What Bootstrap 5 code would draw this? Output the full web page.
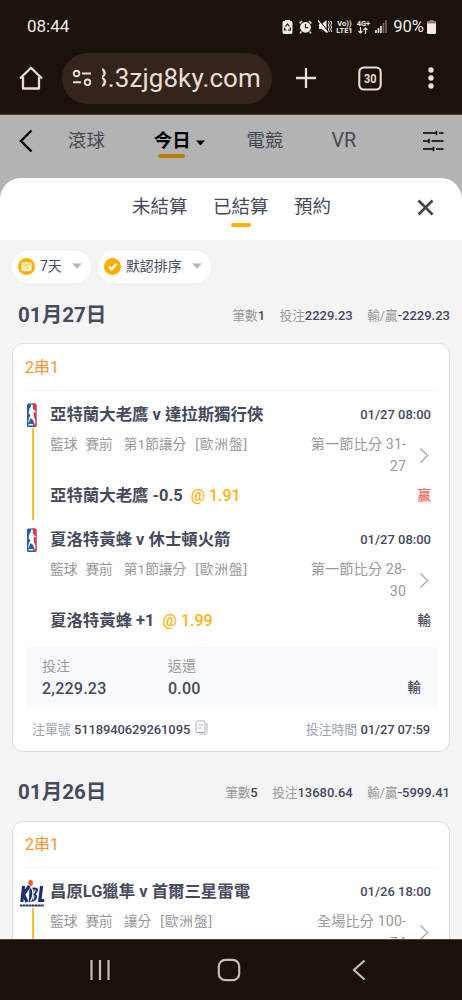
<!DOCTYPE html>
<html lang="zh-Hant">
<head>
<meta charset="utf-8">
<meta name="viewport" content="width=device-width, initial-scale=1">
<title>注單</title>
<link href="https://cdn.jsdelivr.net/npm/bootstrap@5.3.0/dist/css/bootstrap.min.css" rel="stylesheet">
<style>
  body { font-family: Roboto, "Noto Sans CJK TC", sans-serif; color: #454a5c; background: #b3b3b3; height: 1000px; overflow: hidden; }
  svg { display: block; flex: none; }
  .phone { width: 462px; height: 1000px; }
  .statusbar { height: 52px; background: #1b120c; color: #f3ebe6; padding: 2px 26px 0 27px; font-size: 17px; }
  .tiny { font-size: 7.5px; line-height: 7px; font-weight: 700; text-align: center; margin-left: 4px; }
  .browserbar { height: 63px; background: #1b120c; padding: 0 28px 10px 18px; border-bottom: 1px solid #4f3f35; color: #ecddd5; }
  .url-pill { width: 210px; height: 51px; background: #35241b; border-radius: 26px; margin-left: 18px; padding-left: 10px; }
  .url-clip { width: 165px; margin-left: 10px; overflow: hidden; white-space: nowrap; font-size: 26px; line-height: 40px; letter-spacing: .1px; }
  .url-clip span { margin-left: -9px; }
  .appbar { height: 63px; background: #b3b3b3; padding: 0 18px 12px 19px; font-size: 18.4px; color: #454857; line-height: 26px; }
  .sheet { border-radius: 21px 21px 0 0; min-height: 0; }
  .sheet-tabs { height: 62px; padding: 0 28px 4px 132px; font-size: 18.5px; line-height: 28px; gap: 25.5px; }
  .tab-on::after { content: ""; position: absolute; left: 50%; margin-left: -10px; width: 20px; height: 4px; border-radius: 2px; background: #ffb001; bottom: -6px; }
  .today { color: #000; font-weight: 700; }
  .today::after { background: #b57e05; width: 27px; margin-left: -14px; bottom: -4px; }
  .sheet-body { background: #f4f4f4; padding: 11px 12px 0; }
  .chip { height: 32px; border-radius: 16px; background: #fff; font-size: 14px; padding: 0 9px 2px 6px; }
  .chip span { margin-left: 5px; margin-right: 10px; }
  .dayrow { height: 60px; padding: 4px 0 0 6px; }
  .dayrow.later { height: 69px; padding-top: 11px; }
  .day { font-size: 20.6px; font-weight: 700; line-height: 30px; white-space: nowrap; }
  .totals { gap: 14.5px; font-size: 12.6px; color: #999; white-space: nowrap; padding-top: 1px; }
  .totals b, .meta b { font-size: 13px; font-weight: 500; color: #454a5c; }
  .meta b { letter-spacing: -.12px; }
  .slip { border: 1px solid #d8e0e9; border-radius: 11px; padding: 0 12px; }
  .slip-head { height: 47px; color: #ff932e; font-size: 16px; line-height: 48px; border-bottom: 1px solid #f3f3f3; margin-bottom: 11px; }
  .leg { padding-bottom: 20px; color: #454a5c; }
  .leg.last-leg { padding-bottom: 14px; }
  .rail { width: 25px; }
  .rail i { width: 2px; background: #ffc02e; margin: 0 0 -13px 6.5px; }
  .leg-title { height: 24px; font-size: 16.42px; line-height: 26px; font-weight: 700; white-space: nowrap; padding-right: 6px; }
  .leg-title time { font-size: 13px; font-weight: 500; }
  .leg-sub { margin-top: 7px; font-size: 13.7px; line-height: 22px; color: #999; height: 44px; padding-right: 8px; white-space: nowrap; }
  .league { margin-left: 11px; }
  .odds-type { margin-left: 9px; letter-spacing: .9px; }
  .score { width: 104px; white-space: normal; text-align: right; font-size: 14.2px; line-height: 22px; letter-spacing: .1px; margin-right: 13px; }
  .leg-pick { margin-top: 6px; height: 24px; line-height: 25px; font-size: 16.42px; font-weight: 700; padding-right: 6px; }
  .odds { color: #ffb310; font-weight: 500; margin-left: 4px; font-size: 16px; }
  .result { font-size: 13.5px; font-weight: 500; }
  .win { color: #ed655d; }
  .sumbox { height: 62px; background: #f9faff; padding: 10px 17px 0 16px; margin: 0 -1px 0 1px; }
  .sumbox small { display: block; font-size: 14px; line-height: 21px; color: #999; }
  .sumbox b { display: block; font-size: 16.1px; line-height: 23px; font-weight: 500; letter-spacing: .2px; }
  .sumcol { width: 126px; }
  .meta { height: 43px; padding: 0 7px; font-size: 12.9px; color: #9ca4b5; white-space: nowrap; }
  .navkeys { height: 61px; background: #1a110b; border-top: 1px solid #51463f; padding: 0 96px 0 89px; }
</style>
</head>
<body>
<div class="phone d-flex flex-column overflow-hidden">
  <div class="statusbar d-flex align-items-center justify-content-between flex-shrink-0">
    <span>08:44</span>
    <div class="d-flex align-items-center">
      <svg width="11" height="14" viewBox="0 0 11 14"><path d="M3 1V0h5v1h1.500Q10.500 1 10.500 2.500V12Q10.500 14 9 14H2Q.5 14 .5 12V2.500Q.5 1 1.500 1z" fill="#f3ebe6"/><path d="M3.500 6.500 5.500 4l2 2.500M8.200 7.500 8.500 10H6M2.600 7.500 2.500 10h2" fill="none" stroke="#1b120c" stroke-width="1.200"/></svg>
      <svg style="margin:0 6px 0 6px" width="13" height="14" viewBox="0 0 13 14"><circle cx="6.500" cy="7.300" r="5.400" fill="#f3ebe6"/><path d="M.6 3.400 3.200 1M12.400 3.400 9.800 1M2.400 11.500 1 13.300M10.600 11.500l1.400 1.800" stroke="#f3ebe6" stroke-width="1.500"/><path d="M6.500 4v3.600h2.800" fill="none" stroke="#1b120c" stroke-width="1.200"/></svg>
      <svg width="14" height="13" viewBox="0 0 14 13"><path d="M1 4h3l4.500-4v13L4 9H1z" fill="#f3ebe6"/><path d="M1 0 10 11.500" stroke="#1b120c" stroke-width="1.200"/><path d="M0 .5 9.500 12.500" stroke="#f3ebe6" stroke-width="1.300"/><path d="m10.300 1 1 2-1 2 1 2-1 2 1 3M12.700 1l1 2-1 2 1 2-1 2 1 3" stroke="#f3ebe6" fill="none"/></svg>
      <div class="tiny">Vo))<br>LTE1</div>
      <div class="tiny">4G+<svg class="mx-auto" width="10" height="7" viewBox="0 0 10 7"><path d="M2.500 0v6M.5 4l2 2 2-2M7.500 7V1M5.500 3l2-2 2 2" fill="none" stroke="#f3ebe6" stroke-width="1.200"/></svg></div>
      <svg style="margin-left:5px" width="12" height="13" viewBox="0 0 12 13"><path d="M1 10v3M3.500 8v5M6 6v7" stroke="#f3ebe6" stroke-width="1.600"/><path d="M8.500 3v10M11 0v13" stroke="#74695f" stroke-width="1.600"/></svg>
      <span style="margin-left:6px;font-size:16.600px">90%</span>
      <svg style="margin-left:3px" width="9" height="14" viewBox="0 0 9 14"><path d="M2.500 1V0h4v1H8q1 0 1 1v2H0V2q0-1 1-1z" fill="#8a8079"/><path d="M0 3.500h9V12.500Q9 14 7.500 14h-6Q0 14 0 12.500z" fill="#f3ebe6"/></svg>
    </div>
  </div>

  <div class="browserbar d-flex align-items-center flex-shrink-0">
    <svg width="26" height="26" viewBox="0 0 26 26"><path d="M2 13.500 13 2.700l11 10.800M5 12v11.500h16V12" fill="none" stroke="#ecddd5" stroke-width="2.300" stroke-linejoin="round"/></svg>
    <div class="url-pill d-flex align-items-center">
      <svg width="20" height="18" viewBox="0 0 20 18"><g fill="none" stroke="#ecddd5" stroke-width="1.900"><circle cx="4.500" cy="4.500" r="2.800"/><path d="M10 4.500h9M1 13.300h8"/><circle cx="15.500" cy="13.300" r="2.800"/></g></svg>
      <div class="url-clip"><span>3.3zjg8ky.com</span></div>
    </div>
    <svg class="ms-auto" width="22" height="22" viewBox="0 0 22 22"><path d="M11 1v20M1 11h20" stroke="#ecddd5" stroke-width="2.300"/></svg>
    <svg style="margin-left:41px" width="24" height="25" viewBox="0 0 24 25"><rect x="1.300" y="1.500" width="21.400" height="22" rx="4.500" fill="none" stroke="#ecddd5" stroke-width="2.100"/><text x="6" y="17" textLength="12.500" lengthAdjust="spacingAndGlyphs" font-size="12.500" font-weight="700" fill="#ecddd5">30</text></svg>
    <svg style="margin-left:46px" width="6" height="22" viewBox="0 0 6 22"><g fill="#ecddd5"><circle cx="3" cy="3" r="2.700"/><circle cx="3" cy="11" r="2.700"/><circle cx="3" cy="19" r="2.700"/></g></svg>
  </div>

  <div class="appbar d-flex align-items-center flex-shrink-0">
    <svg width="14" height="24" viewBox="0 0 14 24"><path d="M12.500 1.500 2 12l10.500 10.500" fill="none" stroke="#000" stroke-width="2.400"/></svg>
    <span style="margin-left:35px">滾球</span>
    <span class="today tab-on position-relative" style="margin-left:49px">今日</span>
    <svg style="margin:4px 0 0 5px" width="9" height="6" viewBox="0 0 9 6"><path d="M0 .5h9l-4.500 5z"/></svg>
    <span style="margin-left:42px">電競</span>
    <span style="margin-left:48px;font-size:19.800px">VR</span>
    <svg class="ms-auto" width="21" height="22" viewBox="0 0 21 22"><path d="M0 3h13.500M16 3h4.500M0 11h6M8.500 11h12M0 19h10.500M13 19h7.500M13.500 .8v4.400M6 8.800v4.400M10.500 16.800v4.400" fill="none" stroke="#000" stroke-width="1.500"/></svg>
  </div>

  <main class="sheet bg-white flex-grow-1 d-flex flex-column overflow-hidden">
    <div class="sheet-tabs d-flex align-items-center flex-shrink-0">
      <span>未結算</span><span class="tab-on position-relative">已結算</span><span>預約</span>
      <svg class="ms-auto" width="17" height="17" viewBox="0 0 17 17"><path d="M1.500 1.500l14 14m0-14-14 14" stroke="#444" stroke-width="2.700"/></svg>
    </div>
    <div class="sheet-body flex-grow-1">
      <div class="d-flex" style="gap:7px">
        <div class="chip d-flex align-items-center">
          <svg width="17" height="17" viewBox="0 0 17 17"><circle cx="8.500" cy="8.500" r="8.500" fill="#ffae00"/><rect x="4" y="4.600" width="9" height="8" rx="1" fill="#fff1cc" stroke="#fff"/><path d="M4 7h9M6 3.500V6M11 3.500V6" stroke="#ffae00" stroke-width=".8"/><path d="M5.500 9h6M5.500 11h6" stroke="#ffc44a" stroke-dasharray="1.200 .8"/></svg>
          <span>7天</span>
          <svg width="10" height="6" viewBox="0 0 10 6"><path d="M0 .5h10L5 5.800z" fill="#b8b8b8"/></svg>
        </div>
        <div class="chip d-flex align-items-center">
          <svg width="17" height="17" viewBox="0 0 17 17"><circle cx="8.500" cy="8.500" r="8.500" fill="#ffae00"/><path d="m5 8.700 2.700 2.600 4.500-5.600" fill="none" stroke="#fff" stroke-width="2.400"/></svg>
          <span>默認排序</span>
          <svg width="10" height="6" viewBox="0 0 10 6"><path d="M0 .5h10L5 5.800z" fill="#b8b8b8"/></svg>
        </div>
      </div>

      <div class="dayrow d-flex align-items-center justify-content-between">
        <span class="day">01月27日</span>
        <div class="totals d-flex"><span>筆數<b>1</b></span><span>投注<b>2229.23</b></span><span>輸/贏<b>-2229.23</b></span></div>
      </div>

      <section class="slip bg-white">
        <div class="slip-head">2串1</div>
        <div class="leg d-flex">
          <div class="rail d-flex flex-column">
            <svg width="13" height="26" viewBox="0 0 13 26"><rect x="2" y="1.500" width="9.500" height="23.500" rx="1.500" fill="#1d5fae"/><path d="M7 1.500h3q1.500 0 1.500 1.500V23.500q0 1.500-1.500 1.500H9l-1-9z" fill="#e23a44"/><path d="M6 2.500q2-.5 2 1.500l-.5 2 2 2.500 1.500 1-.5 1-2-.5.500 5 1.500 4-.5 4-2-5-2.500-2-1.500 4-1 1 1-5 1.500-3-2-1.500 1-5 1.500-2z" fill="#fff"/><path d="M3.500 22.700H8" stroke="#fff" stroke-width="1.500"/></svg>
            <i class="flex-grow-1"></i>
          </div>
          <div class="flex-grow-1">
            <div class="leg-title d-flex justify-content-between"><span>亞特蘭大老鷹 v 達拉斯獨行俠</span><time>01/27 08:00</time></div>
            <div class="leg-sub d-flex"><span>籃球</span><span class="ms-2">賽前</span><span class="league">第1節讓分</span><span class="odds-type">[歐洲盤]</span><div class="score ms-auto">第一節比分 31-27</div><svg class="align-self-center" width="10" height="17" viewBox="0 0 10 17"><path d="m1.500 1.500 7 7-7 7" fill="none" stroke="#a0a9b8" stroke-width="1.400"/></svg></div>
            <div class="leg-pick d-flex justify-content-between"><span>亞特蘭大老鷹 -0.5 <span class="odds">@ 1.91</span></span><span class="result win">贏</span></div>
          </div>
        </div>
        <div class="leg last-leg d-flex">
          <div class="rail">
            <svg width="13" height="26" viewBox="0 0 13 26"><rect x="2" y="1.500" width="9.500" height="23.500" rx="1.500" fill="#1d5fae"/><path d="M7 1.500h3q1.500 0 1.500 1.500V23.500q0 1.500-1.500 1.500H9l-1-9z" fill="#e23a44"/><path d="M6 2.500q2-.5 2 1.500l-.5 2 2 2.500 1.500 1-.5 1-2-.5.500 5 1.500 4-.5 4-2-5-2.500-2-1.500 4-1 1 1-5 1.500-3-2-1.500 1-5 1.500-2z" fill="#fff"/><path d="M3.500 22.700H8" stroke="#fff" stroke-width="1.500"/></svg>
          </div>
          <div class="flex-grow-1">
            <div class="leg-title d-flex justify-content-between"><span>夏洛特黃蜂 v 休士頓火箭</span><time>01/27 08:00</time></div>
            <div class="leg-sub d-flex"><span>籃球</span><span class="ms-2">賽前</span><span class="league">第1節讓分</span><span class="odds-type">[歐洲盤]</span><div class="score ms-auto">第一節比分 28-30</div><svg class="align-self-center" width="10" height="17" viewBox="0 0 10 17"><path d="m1.500 1.500 7 7-7 7" fill="none" stroke="#a0a9b8" stroke-width="1.400"/></svg></div>
            <div class="leg-pick d-flex justify-content-between"><span>夏洛特黃蜂 +1 <span class="odds">@ 1.99</span></span><span class="result">輸</span></div>
          </div>
        </div>
        <div class="sumbox d-flex">
          <div class="sumcol"><small>投注</small><b>2,229.23</b></div>
          <div class="sumcol"><small>返還</small><b>0.00</b></div>
          <span class="result ms-auto" style="margin-top:21px">輸</span>
        </div>
        <div class="meta d-flex align-items-center justify-content-between">
          <div class="d-flex align-items-center"><span>注單號 <b>5118940629261095</b></span><svg style="margin:-4px 0 0 5px" width="13" height="15" viewBox="0 0 13 15"><path d="M1 2q0-1 1-1h7q1 0 1 1v10.500H2q-1 0-1-1zM3 5h5M3 8h3.500M12 3v9.500q0 1.500-1.500 1.500H4" fill="none" stroke="#a9b1be"/></svg></div>
          <span>投注時間 <b>01/27 07:59</b></span>
        </div>
      </section>

      <div class="dayrow later d-flex align-items-center justify-content-between">
        <span class="day">01月26日</span>
        <div class="totals d-flex"><span>筆數<b>5</b></span><span>投注<b>13680.64</b></span><span>輸/贏<b>-5999.41</b></span></div>
      </div>

      <section class="slip bg-white">
        <div class="slip-head" style="height:46px;line-height:46px">2串1</div>
        <div class="leg d-flex">
          <div class="rail d-flex flex-column">
            <svg style="margin-left:-6px" width="27" height="29" viewBox="0 0 27 29"><g fill="none" stroke="#1b2f72" stroke-width="3.200"><path d="M4.600 7 2.800 23M10.300 7l-5.800 8.500L8 23"/><path d="M22.600 7 20.800 21.500h4.400"/></g><path d="M10.500 9.500Q16 7.500 18.800 9.500q.8 3-2 5.500 2.500 2.500 0 6-3 2.500-7 2z" fill="#1b2f72"/><path d="M12 8.500q4.500 4.500-.5 14" stroke="#fff" stroke-width="1.300" fill="none"/><path d="M16 10.500q.5 2-1 3.500M15 16.500q.5 2.500-1.300 4" stroke="#fff" stroke-width="1.100" fill="none"/><ellipse cx="11.600" cy="4" rx="2.300" ry="3" fill="#f15a24"/><path d="M1 26.500h24" stroke="#1b2f72" stroke-width="1.800" stroke-dasharray="2.500 .4"/></svg>
            <i class="flex-grow-1"></i>
          </div>
          <div class="flex-grow-1">
            <div class="leg-title d-flex justify-content-between"><span>昌原LG獵隼 v 首爾三星雷電</span><time>01/26 18:00</time></div>
            <div class="leg-sub d-flex"><span>籃球</span><span class="ms-2">賽前</span><span class="league">讓分</span><span class="odds-type">[歐洲盤]</span><div class="score ms-auto">全場比分 100-74</div><svg class="align-self-center" width="10" height="17" viewBox="0 0 10 17"><path d="m1.500 1.500 7 7-7 7" fill="none" stroke="#a0a9b8" stroke-width="1.400"/></svg></div>
          </div>
        </div>
      </section>
    </div>
  </main>

  <nav class="navkeys d-flex align-items-center justify-content-between flex-shrink-0">
    <svg width="22" height="22" viewBox="0 0 22 22"><path d="M2.500 1v20M11 1v20M19.500 1v20" stroke="#c3bcb8" stroke-width="2.200"/></svg>
    <svg style="margin-right:5px" width="24" height="24" viewBox="0 0 24 24"><rect x="1.800" y="1.800" width="20.400" height="20.400" rx="6.500" fill="none" stroke="#c3bcb8" stroke-width="2.200"/></svg>
    <svg width="14" height="22" viewBox="0 0 14 22"><path d="M12.500 1.500 2 11l10.500 9.500" fill="none" stroke="#c3bcb8" stroke-width="2.200"/></svg>
  </nav>
</div>
<script src="https://cdn.jsdelivr.net/npm/bootstrap@5.3.0/dist/js/bootstrap.bundle.min.js"></script>
</body>
</html>
